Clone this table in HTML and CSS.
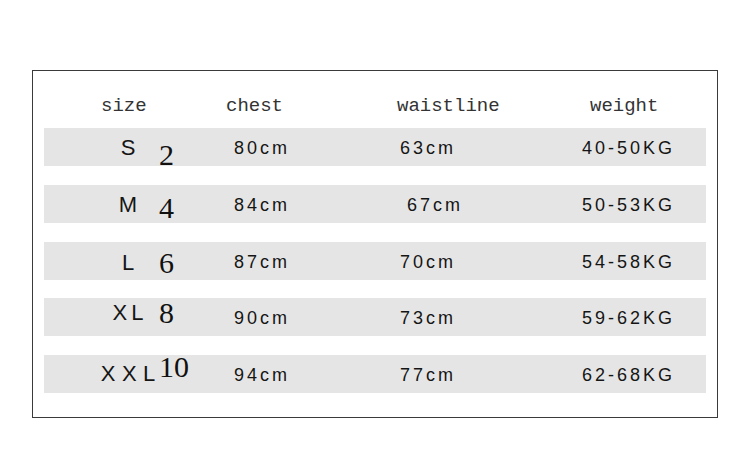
FILE: index.html
```html
<!DOCTYPE html>
<html>
<head>
<meta charset="utf-8">
<link rel="stylesheet" href="styles.css">
</head>
<body>
<div class="chart">
  <div class="head">
    <span class="h-size">size</span>
    <span class="h-chest">chest</span>
    <span class="h-waist">waistline</span>
    <span class="h-weight">weight</span>
  </div>
  <div class="rows">
    <div class="row r1"><span class="sz">S</span><span class="num">2</span><span class="val">80cm</span><span class="val">63cm</span><span class="val">40-50KG</span></div>
    <div class="row r2"><span class="sz">M</span><span class="num">4</span><span class="val">84cm</span><span class="val shift">67cm</span><span class="val">50-53KG</span></div>
    <div class="row r3"><span class="sz">L</span><span class="num">6</span><span class="val">87cm</span><span class="val">70cm</span><span class="val">54-58KG</span></div>
    <div class="row r4"><span class="sz">XL</span><span class="num">8</span><span class="val">90cm</span><span class="val">73cm</span><span class="val">59-62KG</span></div>
    <div class="row r5"><span class="sz">XXL</span><span class="num">10</span><span class="val">94cm</span><span class="val">77cm</span><span class="val">62-68KG</span></div>
  </div>
</div>
</body>
</html>
```
FILE: styles.css
```css
html, body {
  margin: 0;
  padding: 0;
  background: #ffffff;
}
body {
  padding: 70px 0 0 32px;
}
.chart {
  box-sizing: border-box;
  width: 686px;
  height: 348px;
  border: 1px solid #3a3a3a;
  padding: 0 11px;
}
.head {
  display: grid;
  grid-template-columns: 125px 171px 193px 1fr;
  padding: 24px 0 0 57px;
  height: 57px;
  box-sizing: border-box;
  font-family: "Liberation Mono", "DejaVu Sans Mono", monospace;
  font-size: 19px;
  line-height: 22px;
  color: #333;
}
.rows {
  display: flex;
  flex-direction: column;
  gap: 18.75px;
}
.row {
  display: grid;
  grid-template-columns: 80px 66px 166px 182px 1fr;
  align-items: start;
  padding-left: 44px;
  height: 38px;
  background: #e5e5e5;
  color: #151515;
}
.sz {
  font-family: "Liberation Sans", Arial, sans-serif;
  font-size: 22px;
  line-height: 38px;
  padding-top: 1px;
  text-align: center;
  letter-spacing: 5px;
  padding-left: 5px;
  white-space: nowrap;
}
.r3 .sz { padding-top: 2px; }
.r4 .sz { padding-top: 0; margin-top: -4px; letter-spacing: 4px; padding-left: 4px; }
.r5 .sz { padding-top: 0; letter-spacing: 6.5px; padding-left: 6.5px; }
.num {
  font-family: "Liberation Serif", "Times New Roman", serif;
  font-size: 30px;
  line-height: 32px;
  margin-left: -9px;
  color: #111;
}
.r1 .num { margin-top: 11px; }
.r2 .num { margin-top: 7px; }
.r3 .num { margin-top: 5px; }
.r4 .num { margin-top: -1px; }
.r5 .num { margin-top: -4px; }
.val {
  font-family: "Liberation Sans", Arial, sans-serif;
  font-size: 18px;
  line-height: 38px;
  padding-top: 1px;
  letter-spacing: 3px;
  white-space: nowrap;
}
.shift {
  padding-left: 7px;
}
```
